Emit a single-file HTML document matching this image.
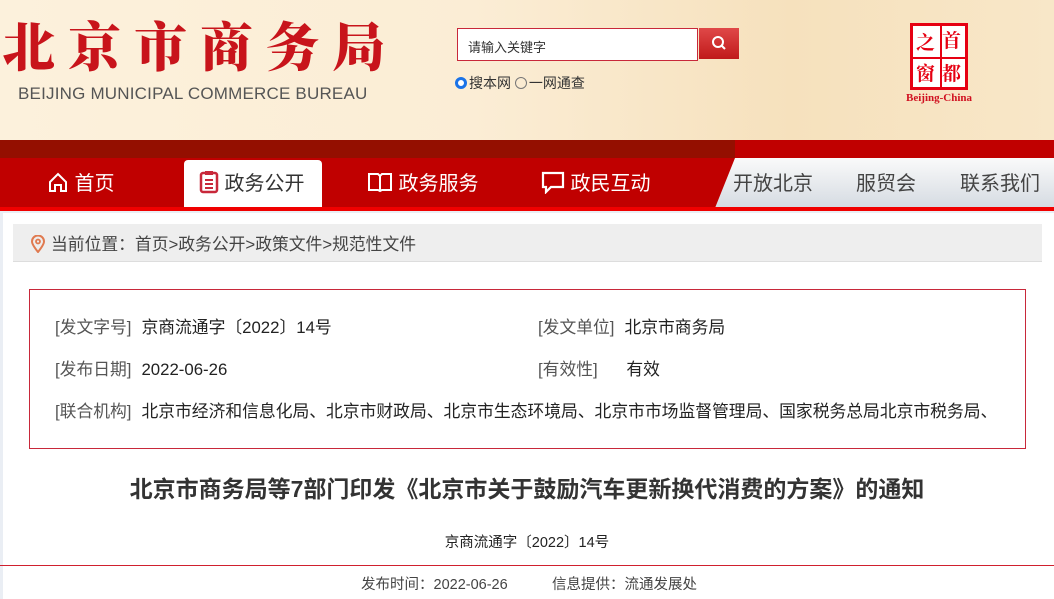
<!DOCTYPE html>
<html><head><meta charset="utf-8"><style>
*{margin:0;padding:0;box-sizing:border-box}
body{width:1054px;height:599px;overflow:hidden;background:#eaeef4;font-family:"Liberation Sans","Noto Sans CJK SC",sans-serif;position:relative;color:#333}
.hdr{position:absolute;left:0;top:0;width:1054px;height:140px;background:linear-gradient(90deg,#fcf1dc 0%,#fbedd5 45%,#f6e1bd 75%,#f8e7c8 100%)}
.logo{position:absolute;left:2px;top:13px;font-family:"Noto Serif CJK SC",serif;font-weight:900;font-size:53px;color:#c8141b;letter-spacing:13px;line-height:62px;white-space:nowrap}
.en{position:absolute;left:18px;top:84px;font-size:17px;color:#555;letter-spacing:0.2px}
.search{position:absolute;left:457px;top:28px;width:241px;height:33px;border:1px solid #c8283a;background:#fff;font-size:13px;padding:8px 0 0 10px;color:#333}
.sbtn{position:absolute;left:699px;top:28px;width:40px;height:31px;background:linear-gradient(#e04848,#c01a1a)}
.radio{position:absolute;left:455px;top:73px;font-size:14px;color:#333}
.radio i{display:inline-block;width:12px;height:12px;border-radius:50%;border:1px solid #777;vertical-align:-1px;margin-right:2px}
.radio i.on{border:3px solid #1a73e8;background:#fff}
.badge{position:absolute;left:910px;top:23px;width:58px;height:67px;border:3px solid #e60012;background:#fff}
.badge span{position:absolute;font-size:19px;color:#e60012;font-weight:bold;font-family:"Noto Serif CJK SC",serif}
.bc{position:absolute;left:906px;top:92px;font-size:11px;font-weight:bold;color:#d01020;font-family:"Liberation Serif",serif}
.nav{position:absolute;left:0;top:140px;width:1054px;height:68px;background:#c00000}
.navtop{position:absolute;left:0;top:140px;width:735px;height:18px;background:#940f00}
.right{position:absolute;left:715px;top:158px;width:339px;height:50px;background:linear-gradient(#fafafa,#d5dbe2);clip-path:polygon(20px 0,100% 0,100% 100%,0 100%)}
.redline{position:absolute;left:0;top:207px;width:1054px;height:4px;background:#f00000}
.ni{position:absolute;top:170px;font-size:20px;color:#fff;line-height:28px}
.act{position:absolute;left:184px;top:160px;width:138px;height:47px;background:#fff;border-radius:4px 4px 0 0}
.ri{position:absolute;top:170px;font-size:20px;color:#444;line-height:28px}
.main{position:absolute;left:3px;top:213px;width:1051px;height:386px;background:#fff}
.crumb{position:absolute;left:13px;top:224px;width:1029px;height:38px;background:#eee;border-bottom:1px solid #ddd;font-size:16.8px;color:#444;padding:7px 0 0 38px}
.box{position:absolute;left:29px;top:289px;width:997px;height:160px;border:1px solid #c8283a}
.row{position:absolute;font-size:16.8px;color:#222;white-space:nowrap}
.row b{font-weight:normal;color:#555;margin-right:10px}
.title{position:absolute;left:0;top:470px;width:1054px;text-align:center;font-size:23px;font-weight:bold;color:#333}
.sub{position:absolute;left:0;top:531px;width:1054px;text-align:center;font-size:14.5px;color:#222}
.hl{position:absolute;left:0;top:565px;width:1054px;height:1px;background:#d0202e}
.foot{position:absolute;left:361px;top:573px;font-size:14.5px;color:#444;white-space:nowrap}
</style></head><body>
<div class="hdr"></div>
<div class="logo">北京市商务局</div>
<div class="en">BEIJING MUNICIPAL COMMERCE BUREAU</div>
<div class="search">请输入关键字</div>
<div class="sbtn"><svg width="40" height="31"><circle cx="19" cy="14" r="5" fill="none" stroke="#fff" stroke-width="2"/><path d="M22 17l4 4" stroke="#fff" stroke-width="2"/></svg></div>
<div class="radio"><i class="on"></i>搜本网 <i></i>一网通查</div>
<div class="badge"><span style="left:3px;top:2px">之</span><span style="left:29px;top:0">首</span><span style="left:3px;top:33px">窗</span><span style="left:29px;top:33px">都</span>
<div style="position:absolute;left:27px;top:0;width:2px;height:61px;background:#e60012"></div><div style="position:absolute;left:0;top:31px;width:52px;height:2px;background:#e60012"></div></div>
<div class="bc">Beijing-China</div>
<div class="nav"></div><div class="navtop"></div>
<div class="right"></div>
<div class="redline"></div>
<div class="act"></div>
<div class="ni" style="left:47px"><svg width="22" height="22" viewBox="0 0 22 22" style="vertical-align:-3px"><path d="M3 11L11 3l8 8v9h-5v-6H8v6H3z" fill="none" stroke="#fff" stroke-width="2"/></svg> 首页</div>
<div class="ni" style="left:199px;color:#333"><svg width="20" height="24" viewBox="0 0 20 24" style="vertical-align:-4px"><rect x="2" y="3" width="16" height="19" rx="2" fill="none" stroke="#c8283a" stroke-width="2.5"/><rect x="6" y="1" width="8" height="4" fill="#c8283a"/><path d="M6 10h8M6 14h8M6 18h8" stroke="#c8283a" stroke-width="2"/></svg> 政务公开</div>
<div class="ni" style="left:367px"><svg width="26" height="22" viewBox="0 0 26 22" style="vertical-align:-3px"><path d="M2 3h9l2 2 2-2h9v16h-9l-2 1-2-1H2z M13 5v15" fill="none" stroke="#fff" stroke-width="2"/></svg> 政务服务</div>
<div class="ni" style="left:541px"><svg width="24" height="24" viewBox="0 0 24 24" style="vertical-align:-4px"><path d="M2 3h20v14H10l-5 5v-5H2z" fill="none" stroke="#fff" stroke-width="2.2"/></svg> 政民互动</div>
<div class="ri" style="left:733px">开放北京</div>
<div class="ri" style="left:856px">服贸会</div>
<div class="ri" style="left:960px">联系我们</div>
<div class="main"></div>
<div class="crumb"><svg width="14" height="18" viewBox="0 0 14 18" style="position:absolute;left:18px;top:11px"><path d="M7 17C3 12 1 9 1 6.5a6 6 0 0112 0C13 9 11 12 7 17z" fill="none" stroke="#e07a50" stroke-width="2"/><circle cx="7" cy="6.5" r="2" fill="none" stroke="#e07a50" stroke-width="1.8"/></svg>当前位置：首页&gt;政务公开&gt;政策文件&gt;规范性文件</div>
<div class="box"></div>
<div class="row" style="left:55px;top:314px"><b>[发文字号]</b>京商流通字〔2022〕14号</div>
<div class="row" style="left:538px;top:314px"><b>[发文单位]</b>北京市商务局</div>
<div class="row" style="left:55px;top:356px"><b>[发布日期]</b>2022-06-26</div>
<div class="row" style="left:538px;top:356px"><b>[有效性]</b>&nbsp;&nbsp;&nbsp;&nbsp;有效</div>
<div class="row" style="left:55px;top:398px"><b>[联合机构]</b>北京市经济和信息化局、北京市财政局、北京市生态环境局、北京市市场监督管理局、国家税务总局北京市税务局、</div>
<div class="title">北京市商务局等7部门印发《北京市关于鼓励汽车更新换代消费的方案》的通知</div>
<div class="sub">京商流通字〔2022〕14号</div>
<div class="hl"></div>
<div class="foot">发布时间：2022-06-26&nbsp;&nbsp;&nbsp;&nbsp;&nbsp;&nbsp;&nbsp;&nbsp;&nbsp;&nbsp;&nbsp;信息提供：流通发展处</div>
</body></html>
